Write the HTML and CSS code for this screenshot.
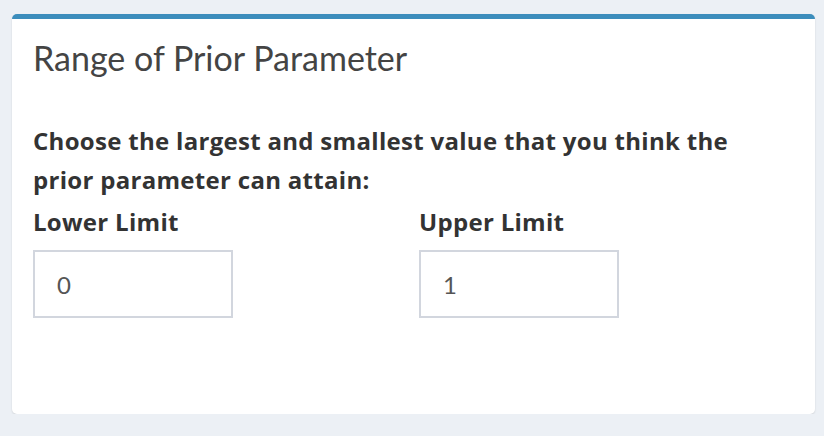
FILE: index.html
```html
<!DOCTYPE html>
<html>
<head>
<meta charset="utf-8">
<link rel="stylesheet" href="styles.css">
</head>
<body>
<div class="box">
  <div class="box-header">
    <h3 class="box-title">Range of Prior Parameter</h3>
  </div>
  <div class="box-body">
    <p class="intro">Choose the largest and smallest value that you think the prior parameter can attain:</p>
    <div class="limits">
      <div class="field">
        <label class="field-label" for="lower">Lower Limit</label>
        <input class="field-input" id="lower" type="text" value="0">
      </div>
      <div class="field">
        <label class="field-label" for="upper">Upper Limit</label>
        <input class="field-input" id="upper" type="text" value="1">
      </div>
    </div>
  </div>
</div>
</body>
</html>
```
FILE: styles.css
```css
html, body {
  margin: 0;
  padding: 0;
}
body {
  background: #ecf0f5;
  font-family: "Open Sans", Lato, sans-serif;
  color: #333;
  padding: 14px 9px 0 12px;
}
.box {
  background: #fff;
  border-top: 5px solid #3c8dbc;
  border-radius: 5px;
  box-shadow: 0 1px 2px rgba(0, 0, 0, 0.12);
  height: 395px;
  box-sizing: content-box;
}
.box-header {
  padding: 19px 21px 0 21px;
}
.box-title {
  margin: 0;
  font-family: Lato, "Open Sans", sans-serif;
  font-size: 34px;
  line-height: 40px;
  font-weight: 400;
  color: #444;
}
.box-body {
  padding: 43px 21px 0 21px;
}
.intro {
  margin: 0;
  max-width: 730px;
  font-size: 24px;
  letter-spacing: 0.3px;
  line-height: 39px;
  font-weight: 700;
  color: #333;
}
.limits {
  display: grid;
  grid-template-columns: 386px 386px;
  margin-top: 3px;
}
.field {
  display: flex;
  flex-direction: column;
  align-items: flex-start;
}
.field-label {
  font-size: 24px;
  letter-spacing: 0.3px;
  line-height: 39px;
  font-weight: 700;
  color: #333;
  margin-bottom: 9px;
}
.field-input {
  box-sizing: border-box;
  width: 200px;
  height: 68px;
  border: 2px solid #d2d6de;
  border-radius: 0;
  padding: 0 22px;
  margin: 0;
  font-family: Lato, "Open Sans", sans-serif;
  font-size: 24px;
  color: #555;
  background: #fff;
  outline: none;
}
```
